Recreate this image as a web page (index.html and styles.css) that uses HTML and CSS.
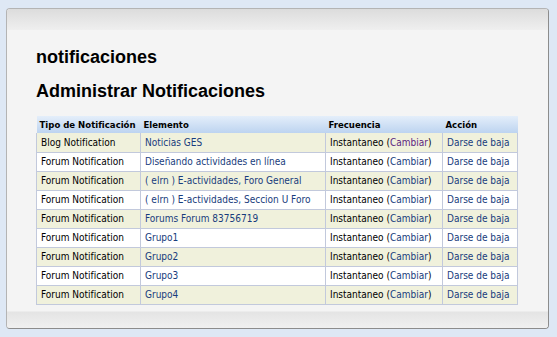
FILE: index.html
```html
<!DOCTYPE html>
<html lang="es">
<head>
    <meta charset="UTF-8">
    <title>notificaciones</title>
    <link rel="stylesheet" href="styles.css">
</head>
<body>

<div class="panel">
    <div class="panel-top"></div>
    <div class="panel-body">
        <h2>notificaciones</h2>
        <h3>Administrar Notificaciones</h3>
        <table class="notif-table">
            <thead>
                <tr>
                    <th class="c1">Tipo de Notificación</th>
                    <th class="c2">Elemento</th>
                    <th class="c3">Frecuencia</th>
                    <th class="c4">Acción</th>
                </tr>
            </thead>
            <tbody>
                <tr class="odd">
                    <td>Blog Notification</td>
                    <td><a href="#">Noticias GES</a></td>
                    <td>Instantaneo (<a href="#" class="visited">Cambiar</a>)</td>
                    <td><a href="#">Darse de baja</a></td>
                </tr>
                <tr>
                    <td>Forum Notification</td>
                    <td><a href="#">Diseñando actividades en línea</a></td>
                    <td>Instantaneo (<a href="#">Cambiar</a>)</td>
                    <td><a href="#">Darse de baja</a></td>
                </tr>
                <tr class="odd">
                    <td>Forum Notification</td>
                    <td><a href="#">( elrn ) E-actividades, Foro General</a></td>
                    <td>Instantaneo (<a href="#">Cambiar</a>)</td>
                    <td><a href="#">Darse de baja</a></td>
                </tr>
                <tr>
                    <td>Forum Notification</td>
                    <td><a href="#">( elrn ) E-actividades, Seccion U Foro</a></td>
                    <td>Instantaneo (<a href="#">Cambiar</a>)</td>
                    <td><a href="#">Darse de baja</a></td>
                </tr>
                <tr class="odd">
                    <td>Forum Notification</td>
                    <td><a href="#">Forums Forum 83756719</a></td>
                    <td>Instantaneo (<a href="#">Cambiar</a>)</td>
                    <td><a href="#">Darse de baja</a></td>
                </tr>
                <tr>
                    <td>Forum Notification</td>
                    <td><a href="#">Grupo1</a></td>
                    <td>Instantaneo (<a href="#">Cambiar</a>)</td>
                    <td><a href="#">Darse de baja</a></td>
                </tr>
                <tr class="odd">
                    <td>Forum Notification</td>
                    <td><a href="#">Grupo2</a></td>
                    <td>Instantaneo (<a href="#">Cambiar</a>)</td>
                    <td><a href="#">Darse de baja</a></td>
                </tr>
                <tr>
                    <td>Forum Notification</td>
                    <td><a href="#">Grupo3</a></td>
                    <td>Instantaneo (<a href="#">Cambiar</a>)</td>
                    <td><a href="#">Darse de baja</a></td>
                </tr>
                <tr class="odd">
                    <td>Forum Notification</td>
                    <td><a href="#">Grupo4</a></td>
                    <td>Instantaneo (<a href="#">Cambiar</a>)</td>
                    <td><a href="#">Darse de baja</a></td>
                </tr>
            </tbody>
        </table>
    </div>
    <div class="panel-bottom"></div>
</div>

</body>
</html>
```

FILE: styles.css
```css
* {
    margin: 0;
    padding: 0;
    box-sizing: border-box;
}
body {
    background: #dee8f5;
    font-family: 'Liberation Sans', Arial, sans-serif;
    padding: 8px 8px 0 6px;
}
.panel {
    width: 543px;
    background: #f4f4f4;
    border: 1px solid #b4b4b4;
    border-right-color: #8c8c8c;
    border-bottom-color: #8c8c8c;
    border-radius: 4px;
    overflow: hidden;
}
.panel-top {
    height: 21px;
    background: linear-gradient(#dcdcdc, #efefef);
}
.panel-body {
    padding: 16px 29px 6px 29px;
}
.panel-bottom {
    height: 17px;
    background: linear-gradient(#e4e4e4, #f0f0f0);
    border-top: 1px solid #ececec;
}
h2 {
    font-size: 18px;
    font-weight: bold;
    color: #000;
    line-height: 22px;
    margin-bottom: 11px;
}
h3 {
    font-size: 18px;
    font-weight: bold;
    color: #000;
    line-height: 24px;
    margin-bottom: 13px;
}
.notif-table {
    width: 482px;
    table-layout: fixed;
    border-collapse: collapse;
    font-family: 'DejaVu Sans Condensed', 'DejaVu Sans', sans-serif;
    font-size: 10px;
}
.notif-table th {
    text-align: left;
    font-weight: bold;
    font-size: 9.5px;
    height: 17px;
    padding: 0 3px;
    background: linear-gradient(#e4eefa, #bdd4f0);
    color: #000;
    white-space: nowrap;
    overflow: hidden;
}
.notif-table td {
    height: 19px;
    padding: 0 4px;
    border: 1px solid #c2c9dc;
    border-top: none;
    background: #fff;
    color: #000;
    white-space: nowrap;
    overflow: hidden;
}
.notif-table tr.odd td {
    background: #f0f1dc;
}
.c1 { width: 104px; }
.c2 { width: 185px; }
.c3 { width: 117px; }
.notif-table a {
    color: #183c7c;
    text-decoration: none;
}
.notif-table a.visited {
    color: #5c2480;
}
```
